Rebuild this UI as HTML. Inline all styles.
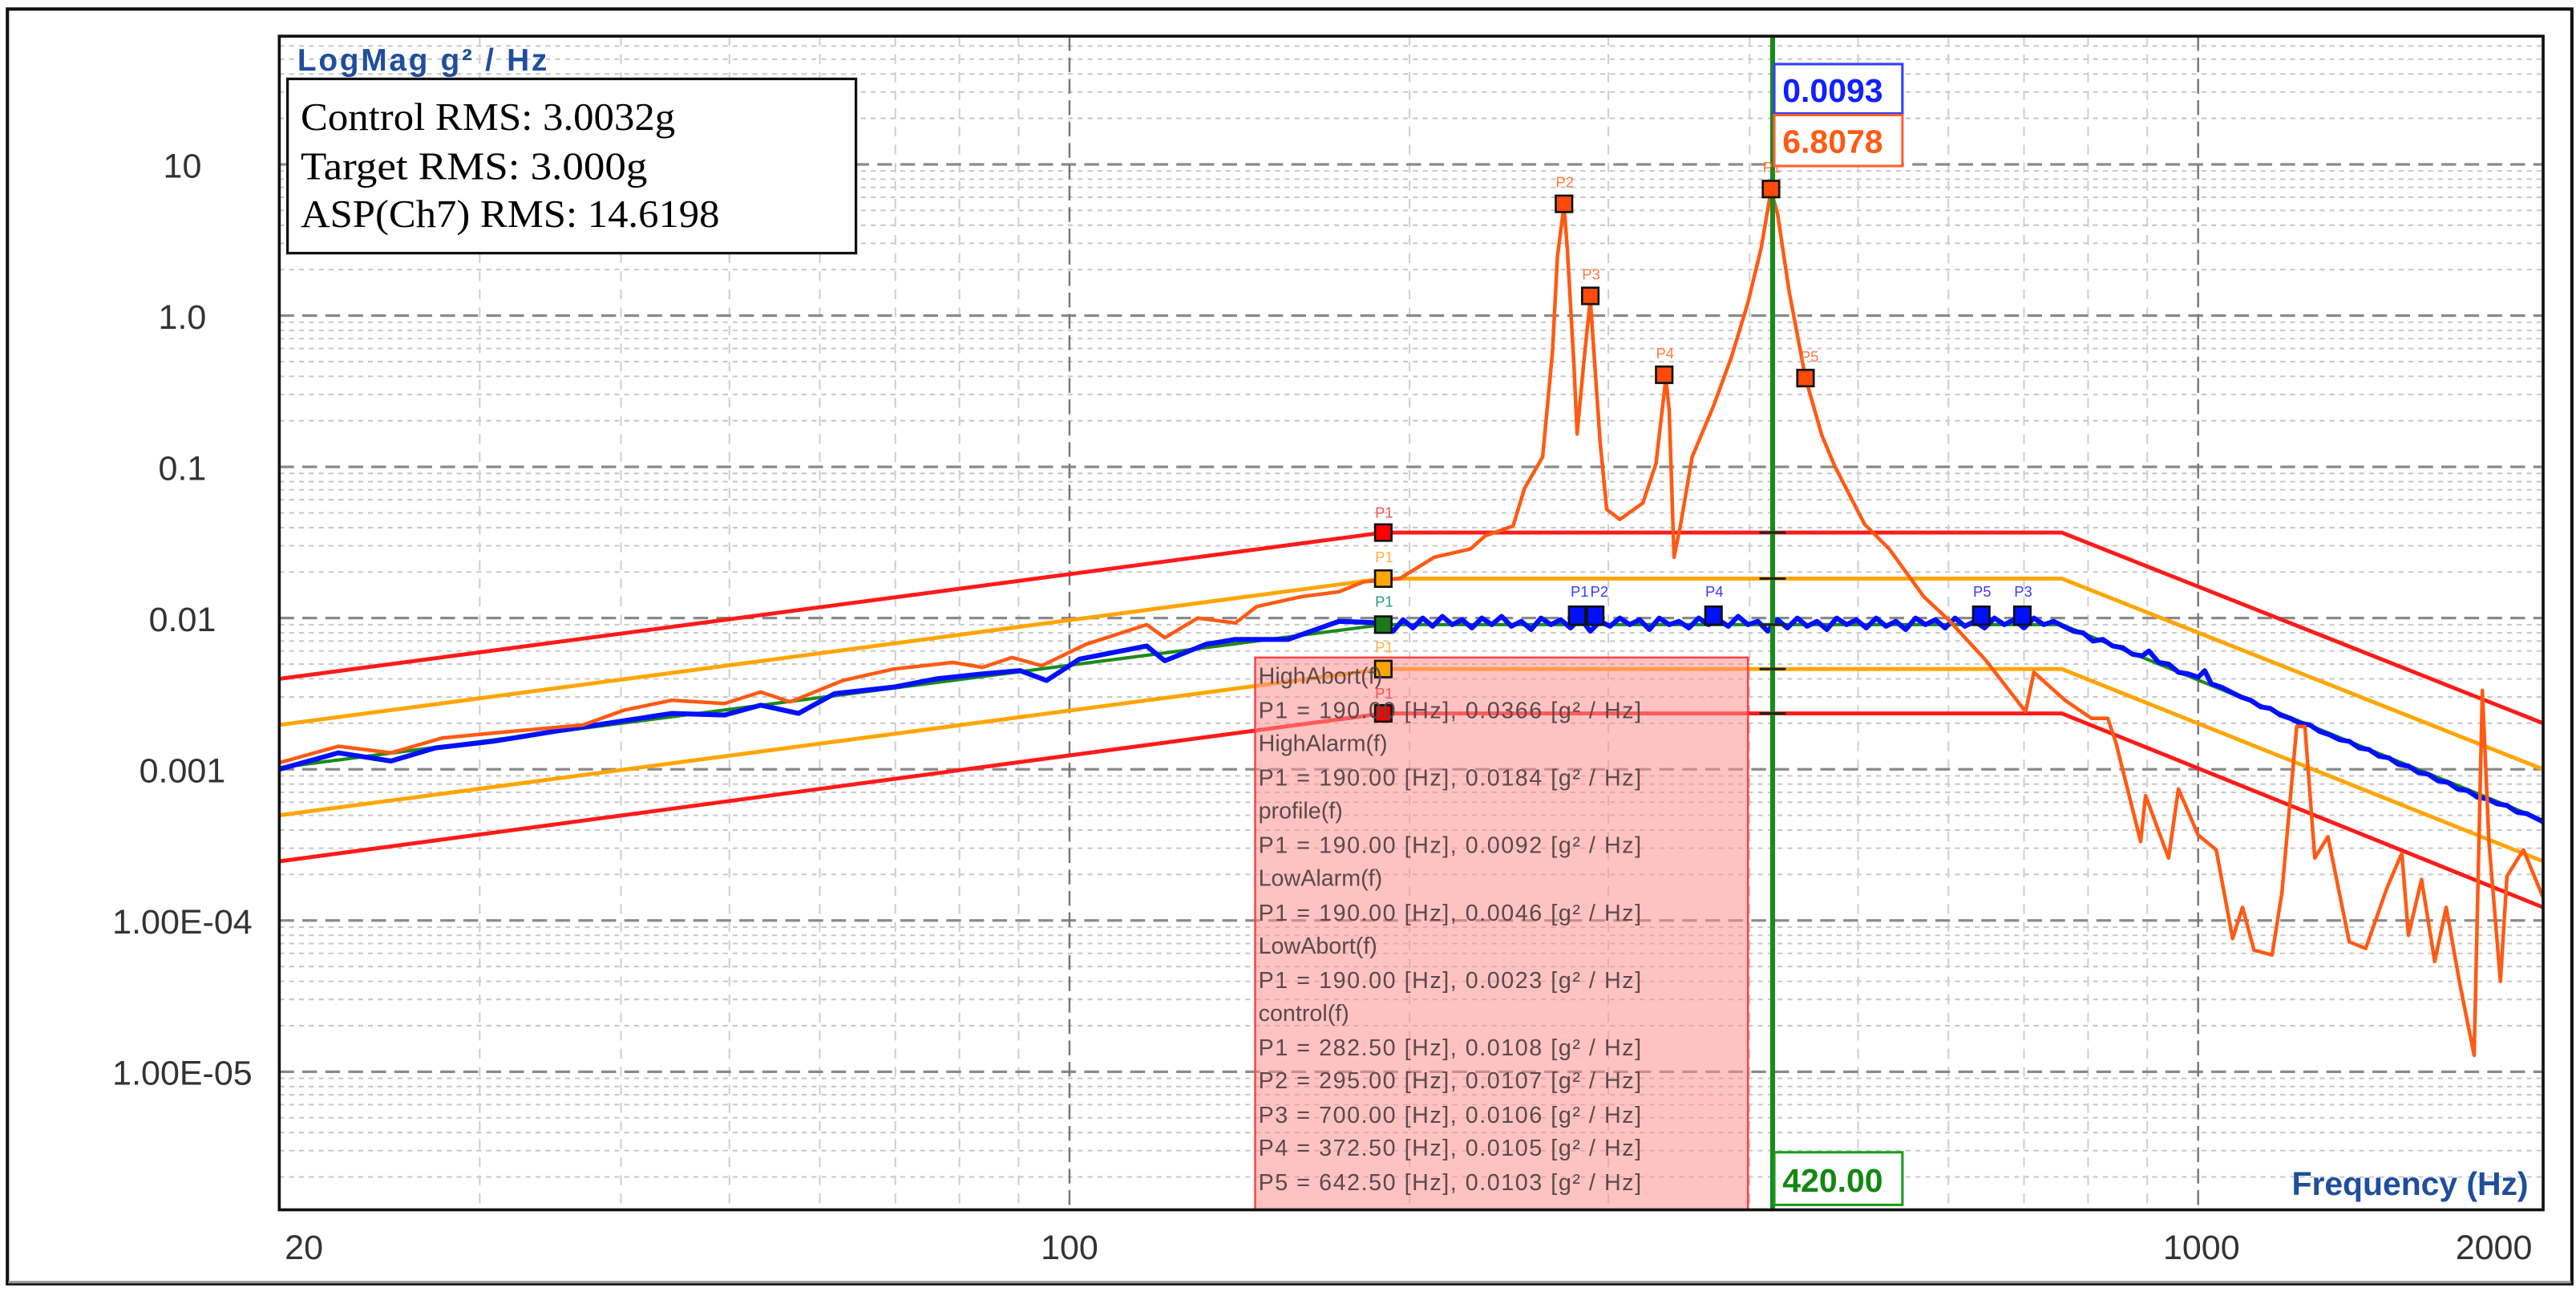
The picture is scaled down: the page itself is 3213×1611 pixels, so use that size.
<!DOCTYPE html>
<html><head><meta charset="utf-8"><style>
html,body{margin:0;padding:0;background:#fff;}
svg{display:block;}
</style></head><body>
<svg width="3213" height="1611" viewBox="0 0 1568 786" preserveAspectRatio="none" xmlns="http://www.w3.org/2000/svg" font-family="Liberation Sans, sans-serif">
<rect x="0" y="0" width="1568" height="786" fill="#fff"/>
<rect x="4.5" y="5.5" width="1561" height="775.5" fill="#fff" stroke="#111" stroke-width="2"/>
<line x1="5" y1="780" x2="1565" y2="780" stroke="#999" stroke-width="1.5"/>
<rect x="170" y="22" width="1378" height="714" fill="#fff"/>
<g stroke="#c8c8c8" stroke-width="1" stroke-dasharray="3 3" fill="none">
<path d="M170 72H1548M170 56H1548M170 45H1548M170 36H1548M170 28H1548
M170 164H1548M170 148H1548M170 137H1548M170 128H1548M170 120H1548M170 114H1548M170 109H1548M170 104H1548
M170 256H1548M170 240H1548M170 229H1548M170 220H1548M170 212H1548M170 206H1548M170 201H1548M170 196H1548
M170 348H1548M170 332H1548M170 321H1548M170 312H1548M170 304H1548M170 298H1548M170 293H1548M170 288H1548
M170 440H1548M170 424H1548M170 413H1548M170 404H1548M170 396H1548M170 390H1548M170 385H1548M170 380H1548
M170 532H1548M170 516H1548M170 505H1548M170 496H1548M170 488H1548M170 482H1548M170 477H1548M170 472H1548
M170 624H1548M170 608H1548M170 597H1548M170 588H1548M170 580H1548M170 574H1548M170 569H1548M170 564H1548
M170 716H1548M170 700H1548M170 689H1548M170 680H1548M170 672H1548M170 666H1548M170 661H1548M170 656H1548"/>
</g>
<g stroke="#cfcfcf" stroke-width="1" stroke-dasharray="6 5" fill="none">
<path d="M292 22V736M378 22V736M444 22V736M499 22V736M545 22V736M584 22V736M620 22V736M858 22V736M979 22V736M1065 22V736M1131 22V736M1186 22V736M1232 22V736M1271 22V736M1307 22V736"/>
</g>
<g stroke="#8a8a8a" stroke-width="1.6" stroke-dasharray="9 5" fill="none">
<path d="M170 100H1548M170 192H1548M170 284H1548M170 376H1548M170 468H1548M170 560H1548M170 652H1548"/>
</g>
<g stroke="#777" stroke-width="1.2" stroke-dasharray="9 4" fill="none">
<path d="M651 22V736M1338 22V736"/>
</g>
<g fill="none" stroke-width="2.4" stroke-linejoin="round">
<polyline stroke="#ff1a1a" points="170,413 842,324 1255,324 1548,440"/>
<polyline stroke="#ffa500" points="170,441 842,352 1255,352 1548,468"/>
<polyline stroke="#ffa500" points="170,496 842,407 1255,407 1548,524"/>
<polyline stroke="#ff1a1a" points="170,524 842,434 1255,434 1548,552"/>
<polyline stroke="#1a8a1a" stroke-width="2" points="170,467 842,380 1255,380 1548,499"/>
</g>
<polyline fill="none" stroke="#0010ff" stroke-width="3" stroke-linejoin="round" points="170,468 206,458 238,463 265,455 300,451 337,445 370,440 409,434 441,435 463,429 486,434 508,422 544,418 570,413 598,410 621,408 637,414 657,401 698,393 709,402 734,392 752,389 784,389 815,378 842,379 848,384 854,377 860,382 866,376 872,381 878,375 884,380 890,377 896,382 902,376 908,380 914,375 920,381 926,378 932,383 938,376 944,380 950,377 956,382 962,376 968,384 974,378 980,381 986,376 992,380 998,377 1004,383 1010,376 1016,380 1022,378 1028,382 1034,376 1040,380 1046,377 1052,381 1058,375 1064,380 1070,378 1076,384 1082,377 1088,382 1094,376 1100,381 1106,378 1112,383 1118,376 1124,380 1130,377 1136,382 1142,376 1148,381 1154,378 1160,383 1166,376 1172,380 1178,377 1184,382 1190,376 1196,381 1202,378 1208,382 1214,376 1220,380 1226,377 1232,382 1238,376 1244,380 1250,378 1256,381 1262,384 1268,385 1274,390 1280,389 1286,393 1292,394 1298,398 1304,399 1308,396 1314,403 1320,404 1326,409 1332,410 1338,412 1342,408 1346,416 1352,418 1358,421 1364,424 1370,426 1376,430 1382,431 1388,435 1394,437 1400,440 1406,441 1412,445 1418,447 1424,450 1430,451 1436,455 1442,456 1448,460 1454,461 1460,465 1466,466 1472,470 1478,471 1484,475 1490,476 1496,480 1502,481 1508,485 1514,486 1520,489 1526,490 1532,494 1538,495 1548,500"/>
<polyline fill="none" stroke="#ff5a14" stroke-width="2.2" stroke-linejoin="round" points="170,464 206,454 238,458 269,449 300,446 355,441 380,432 409,426 441,428 463,421 481,427 513,414 544,407 580,403 598,406 616,400 634,405 661,392 698,380 709,388 729,376 752,379 765,369 792,363 815,360 830,354 852,352 873,339 895,334 904,326 921,320 928,297 939,278 945,214 948,156 952,125 954,151 958,221 960,264 964,221 968,182 974,269 978,310 986,316 1000,306 1008,282 1014,230 1016,249 1019,339 1023,319 1030,278 1043,247 1054,217 1064,184 1072,151 1078,116 1082,130 1089,177 1099,230 1109,265 1117,284 1135,319 1150,334 1163,352 1171,363 1186,377 1209,402 1233,433 1238,409 1257,426 1273,437 1283,437 1288,452 1303,512 1306,484 1320,522 1326,480 1338,508 1349,517 1359,571 1365,552 1372,578 1383,581 1389,543 1398,442 1403,442 1409,522 1417,509 1430,573 1440,577 1453,540 1462,519 1466,569 1474,535 1482,585 1489,552 1497,597 1506,642 1511,420 1515,512 1522,597 1526,533 1536,517 1548,546"/>
<line x1="1079" y1="22" x2="1079" y2="736" stroke="#1a8a1a" stroke-width="3"/>
<g stroke="#222" stroke-width="1.5"><path d="M1071 324H1087M1071 352H1087M1071 380H1087M1071 407H1087M1071 434H1087"/></g>
<rect x="764" y="400" width="300" height="336" fill="#ff8f8f" fill-opacity="0.55" stroke="#ff4040" stroke-width="1.2"/>
<g stroke="#111" stroke-width="1.3">
<rect x="837" y="319" width="10" height="10" fill="#f00"/>
<rect x="837" y="347" width="10" height="10" fill="#ffa500"/>
<rect x="837" y="375" width="10" height="10" fill="#1a7a1a"/>
<rect x="837" y="402" width="10" height="10" fill="#ffa500"/>
<rect x="837" y="429" width="10" height="10" fill="#f00"/>
<rect x="947" y="119" width="10" height="10" fill="#ff4a0a"/>
<rect x="963" y="175" width="10" height="10" fill="#ff4a0a"/>
<rect x="1008" y="223" width="10" height="10" fill="#ff4a0a"/>
<rect x="1073" y="110" width="10" height="10" fill="#ff4a0a"/>
<rect x="1094" y="225" width="10" height="10" fill="#ff4a0a"/>
<rect x="955" y="369" width="10" height="11" fill="#0010ff"/>
<rect x="966" y="369" width="10" height="11" fill="#0010ff"/>
<rect x="1038" y="369" width="10" height="11" fill="#0010ff"/>
<rect x="1201" y="369" width="10" height="11" fill="#0010ff"/>
<rect x="1226" y="369" width="10" height="11" fill="#0010ff"/>
</g>
<g font-size="9">
<text x="837" y="315" fill="#ff5050">P1</text>
<text x="837" y="342" fill="#ffb040">P1</text>
<text x="837" y="369" fill="#20a080">P1</text>
<text x="837" y="397" fill="#ffb040">P1</text>
<text x="837" y="425" fill="#ff5050">P1</text>
<text x="947" y="114" fill="#ff7a40">P2</text>
<text x="963" y="170" fill="#ff7a40">P3</text>
<text x="1008" y="218" fill="#ff7a40">P4</text>
<text x="1073" y="105" fill="#ff7a40">P1</text>
<text x="1096" y="220" fill="#ff7a40">P5</text>
<text x="956" y="363" fill="#3a3aff">P1</text>
<text x="968" y="363" fill="#3a3aff">P2</text>
<text x="1038" y="363" fill="#3a3aff">P4</text>
<text x="1201" y="363" fill="#3a3aff">P5</text>
<text x="1226" y="363" fill="#3a3aff">P3</text>
</g>
<g font-size="14" fill="#5a4a4a">
<text x="766" y="416">HighAbort(f)</text>
<text x="766" y="437" textLength="233">P1 = 190.00 [Hz], 0.0366 [g² / Hz]</text>
<text x="766" y="457">HighAlarm(f)</text>
<text x="766" y="478" textLength="233">P1 = 190.00 [Hz], 0.0184 [g² / Hz]</text>
<text x="766" y="498">profile(f)</text>
<text x="766" y="519" textLength="233">P1 = 190.00 [Hz], 0.0092 [g² / Hz]</text>
<text x="766" y="539">LowAlarm(f)</text>
<text x="766" y="560" textLength="233">P1 = 190.00 [Hz], 0.0046 [g² / Hz]</text>
<text x="766" y="580">LowAbort(f)</text>
<text x="766" y="601" textLength="233">P1 = 190.00 [Hz], 0.0023 [g² / Hz]</text>
<text x="766" y="621">control(f)</text>
<text x="766" y="642" textLength="233">P1 = 282.50 [Hz], 0.0108 [g² / Hz]</text>
<text x="766" y="662" textLength="233">P2 = 295.00 [Hz], 0.0107 [g² / Hz]</text>
<text x="766" y="683" textLength="233">P3 = 700.00 [Hz], 0.0106 [g² / Hz]</text>
<text x="766" y="703" textLength="233">P4 = 372.50 [Hz], 0.0105 [g² / Hz]</text>
<text x="766" y="724" textLength="233">P5 = 642.50 [Hz], 0.0103 [g² / Hz]</text>
</g>
<rect x="1080" y="39" width="78" height="30" fill="#fff" stroke="#3040ff" stroke-width="1.5"/>
<text x="1085" y="62" font-size="20" font-weight="bold" fill="#1020ff">0.0093</text>
<rect x="1080" y="70" width="78" height="31" fill="#fff" stroke="#ff6030" stroke-width="1.5"/>
<text x="1085" y="93" font-size="20" font-weight="bold" fill="#ff5a14">6.8078</text>
<rect x="1080" y="701" width="78" height="32" fill="#fff" stroke="#1a9a1a" stroke-width="1.5"/>
<text x="1085" y="725" font-size="20" font-weight="bold" fill="#118811">420.00</text>
<rect x="170" y="22" width="1378" height="714" fill="none" stroke="#111" stroke-width="1.8"/>
<text x="181" y="43" font-size="19" font-weight="bold" fill="#1f4e9c" textLength="152">LogMag g² / Hz</text>
<text x="1395" y="727" font-size="20" font-weight="bold" fill="#1f4e9c" textLength="144">Frequency (Hz)</text>
<rect x="175" y="48" width="346" height="106" fill="#fff" stroke="#111" stroke-width="1.6"/>
<g font-family="Liberation Serif, serif" font-size="24" fill="#000">
<text x="183" y="79" textLength="228" lengthAdjust="spacingAndGlyphs">Control RMS: 3.0032g</text>
<text x="183" y="109" textLength="211" lengthAdjust="spacingAndGlyphs">Target  RMS: 3.000g</text>
<text x="183" y="138" textLength="255" lengthAdjust="spacingAndGlyphs">ASP(Ch7) RMS: 14.6198</text>
</g>
<g font-size="21" fill="#333" text-anchor="middle">
<text x="111" y="108">10</text>
<text x="111" y="200">1.0</text>
<text x="111" y="292">0.1</text>
<text x="111" y="384">0.01</text>
<text x="111" y="476">0.001</text>
<text x="111" y="568">1.00E-04</text>
<text x="111" y="660">1.00E-05</text>
<text x="185" y="766">20</text>
<text x="651" y="766">100</text>
<text x="1340" y="766">1000</text>
<text x="1518" y="766">2000</text>
</g>
</svg>
</body></html>
